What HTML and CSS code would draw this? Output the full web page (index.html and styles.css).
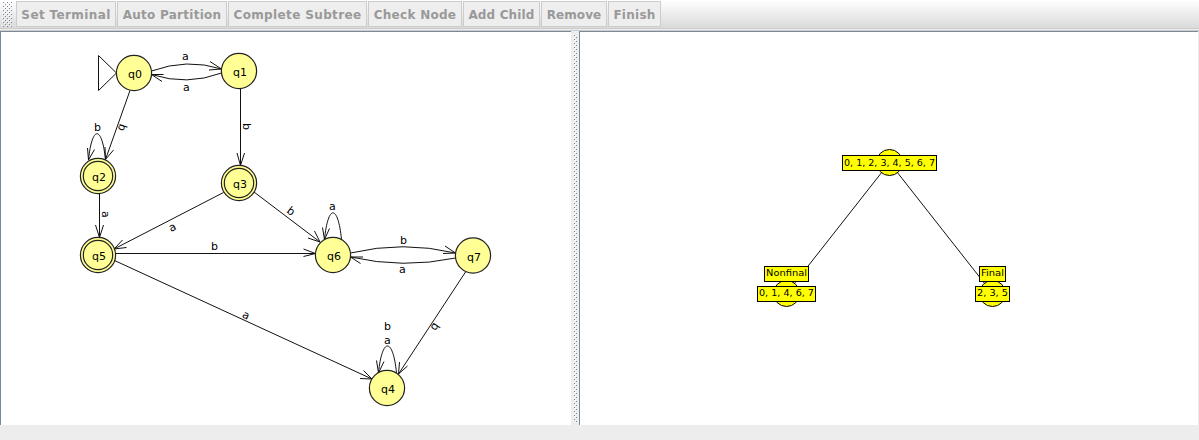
FILE: index.html
```
<!DOCTYPE html>
<html lang="en">
<head>
<meta charset="utf-8">
<title>DFA Minimization</title>
<link rel="stylesheet" href="styles.css">
</head>
<body>
<div class="toolbar">
  <svg class="grip" width="11" height="26"><defs><pattern id="bumps" width="4" height="4" patternUnits="userSpaceOnUse"><path class="bump-light" d="M0 0h1v1h-1zM2 2h1v1h-1z"/><path class="bump-dark" d="M1 1h1v1h-1zM3 3h1v1h-1z"/></pattern></defs><rect width="10" height="26" fill="url(#bumps)"/></svg>
  <div class="buttons">
    <button class="b-terminal" disabled>Set Terminal</button>
    <button class="b-partition" disabled>Auto Partition</button>
    <button class="b-subtree" disabled>Complete Subtree</button>
    <button class="b-check" disabled>Check Node</button>
    <button class="b-child" disabled>Add Child</button>
    <button class="b-remove" disabled>Remove</button>
    <button class="b-finish" disabled>Finish</button>
  </div>
</div>
<div class="split">
  <div class="pane">
    <svg class="canvas" width="570" height="393" viewBox="1 32 570 393">
      <g class="edge">
        <path d="M116.500 73L98.500 55.500V90.500Z"/>
        <path d="M151.500 71Q187 58 221.500 69M210 61.500L221.500 69L209 70"/>
        <path d="M221.500 73Q187 86 151.500 74.500M163.500 74.500L151.500 74.500L162 81.500"/>
        <path d="M130 90.500L105.500 159.500M105 147L105.500 159.500L113.500 150"/>
        <path d="M240.500 89V165.500M237 153L240.500 165.500L244.500 153"/>
        <path d="M105.500 160C102 125 92 125 88.500 160M87.500 148L88.500 160L94.500 149.500"/>
        <path d="M99.500 193.500V237.500M95.500 225L99.500 237.500L103.500 225"/>
        <path d="M223.500 192.500L114 249M122.500 240L114 249L126.500 247.500"/>
        <path d="M254 192L320 242M314.500 231L320 242L308 238"/>
        <path d="M115.500 253.500H315.500M303.500 249L315.500 253.500L303.500 256.500"/>
        <path d="M341.500 239.500C338 204 328 204 324.500 239.500M322.500 227.500L324.500 239.500L329.500 228.500"/>
        <path d="M350.500 253Q403 240.500 455.500 253M445 246L455.500 253L443 253.500"/>
        <path d="M455.500 258Q403 269 350.500 257M363 257L350.500 257L360.500 263.500"/>
        <path d="M114.500 260.500L372 379M363.500 370.500L372 379L360 378.500"/>
        <path d="M465.500 272L398.500 374M399.500 362L398.500 374L407.500 366"/>
        <path d="M396.500 373C393 337 382 337 378.500 373M376.500 360.500L378.500 373L384 361.500"/>
      </g>
      <g class="state">
        <circle cx="134" cy="73" r="17.600"/><circle cx="239" cy="71" r="17.600"/>
        <circle cx="98" cy="176" r="17.600"/><circle cx="98" cy="176" r="14.700"/>
        <circle cx="239" cy="183" r="17.600"/><circle cx="239" cy="183" r="14.700"/>
        <circle cx="98" cy="255" r="17.600"/><circle cx="98" cy="255" r="14.700"/>
        <circle cx="333" cy="255" r="17.600"/><circle cx="473" cy="255.500" r="17.600"/>
        <circle cx="387" cy="388" r="17.600"/>
      </g>
      <g class="label">
        <text x="128" y="78">q0</text><text x="233" y="76">q1</text><text x="92" y="181">q2</text>
        <text x="233" y="188">q3</text><text x="92" y="260">q5</text><text x="327" y="260">q6</text>
        <text x="467" y="261">q7</text><text x="381" y="393">q4</text>
        <text x="182" y="60">a</text><text x="183" y="91">a</text><text x="94" y="131">b</text>
        <text x="211" y="250">b</text><text x="329" y="210">a</text><text x="400" y="244">b</text>
        <text x="399" y="273">a</text><text x="384" y="330">b</text><text x="384" y="344">a</text>
        <text transform="translate(120 123) rotate(110)">b</text>
        <text transform="translate(243 123) rotate(90)">b</text>
        <text transform="translate(102 211) rotate(90)">a</text>
        <text transform="translate(171 232) rotate(-27)">a</text>
        <text transform="translate(286 212) rotate(37)">b</text>
        <text transform="translate(241.500 317) rotate(25)">a</text>
        <text transform="translate(434 322) rotate(123)">b</text>
      </g>
    </svg>
  </div>
  <svg class="divider" width="8" height="394"><g transform="translate(2 3)"><rect width="4" height="388" fill="url(#bumps)"/></g></svg>
  <div class="pane pane-tree">
    <svg class="canvas" width="618" height="393" viewBox="580 32 618 393">
      <g class="edge"><path d="M889.500 162.500L786.500 293.500"/><path d="M889.500 162.500L992.500 293.500"/></g>
      <g class="tree-node"><circle cx="889.500" cy="162.500" r="13"/><circle cx="786.500" cy="293.500" r="13"/><circle cx="992.500" cy="293.500" r="13"/></g>
      <g class="tree-box">
        <rect x="842.500" y="155.500" width="94" height="15"/>
        <rect x="764.500" y="266.500" width="44" height="15"/><rect x="757.500" y="286.500" width="58" height="15"/>
        <rect x="979.500" y="266.500" width="26" height="15"/><rect x="975.500" y="286.500" width="34" height="15"/>
      </g>
      <g class="tree-text">
        <text x="844" y="166" textLength="91" lengthAdjust="spacingAndGlyphs">0, 1, 2, 3, 4, 5, 6, 7</text>
        <text x="766" y="276" textLength="41" lengthAdjust="spacingAndGlyphs">Nonfinal</text>
        <text x="759" y="296" textLength="55" lengthAdjust="spacingAndGlyphs">0, 1, 4, 6, 7</text>
        <text x="981" y="276" textLength="23" lengthAdjust="spacingAndGlyphs">Final</text>
        <text x="977" y="296" textLength="31" lengthAdjust="spacingAndGlyphs">2, 3, 5</text>
      </g>
    </svg>
  </div>
</div>
</body>
</html>
```
FILE: styles.css
```
body { margin: 0; width: 1199px; height: 440px; overflow: hidden; background: #ededed; font-family: "DejaVu Sans", sans-serif; }
.toolbar { display: flex; box-sizing: border-box; height: 31px; padding: 1px 2px 0; background: linear-gradient(#fff, #dadada 28px, #ccc 28px, #ccc 29px, #ededed 29px, #ededed 30px, #ccc 30px); }
.grip { display: block; margin-right: 3px; }
.buttons { display: flex; gap: 1px; height: 26px; }
.buttons button { box-sizing: border-box; height: 26px; padding: 1px 0 0; border: 1px solid #ccc; border-radius: 0; background: #eee; color: #999; font: bold 12px "DejaVu Sans", sans-serif; white-space: nowrap; }
.buttons .b-terminal { width: 100px; letter-spacing: 0.38px; }
.buttons .b-partition { width: 110px; letter-spacing: 0.27px; }
.buttons .b-subtree { width: 139px; letter-spacing: 0.37px; }
.buttons .b-check { width: 94px; letter-spacing: 0.28px; }
.buttons .b-child { width: 77px; letter-spacing: 0.15px; }
.buttons .b-remove { width: 66px; letter-spacing: 0.1px; }
.buttons .b-finish { width: 53px; letter-spacing: 0.25px; }
.split { display: flex; height: 394px; }
.pane { box-sizing: border-box; width: 571px; border-top: 1px solid #7a8a99; border-left: 1px solid #7a8a99; background: #fff; }
.pane-tree { width: 619px; }
.canvas, .divider { display: block; flex: none; }
.bump-light { fill: #fff; }
.bump-dark { fill: #7a8a99; }
.edge { fill: none; stroke: #111; stroke-width: 1; }
.state { fill: #ffff96; stroke: #222; stroke-width: 1.2; }
.label { font-size: 11px; }
.tree-node, .tree-box { fill: #ff0; stroke: #000; stroke-width: 1; }
.tree-text { font-size: 9px; }
```
